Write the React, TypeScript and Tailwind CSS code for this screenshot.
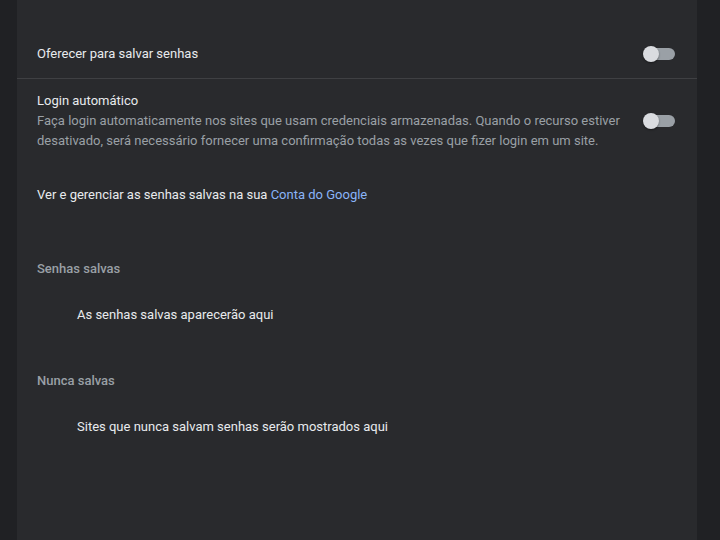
import React from "react";

const Toggle = () => (
  <div className="relative w-[32px] h-4 shrink-0">
    <div className="absolute left-[3px] right-0 top-[2px] h-3 rounded-full bg-[#9aa0a6]" />
    <div className="absolute left-0 top-0 w-4 h-4 rounded-full bg-[#dadce0] shadow-[0_1px_2px_rgba(0,0,0,0.4)]" />
  </div>
);

export default function App() {
  return (
    <div
      className="h-[540px] w-[720px] overflow-hidden bg-[#202124] pl-[17px] text-[13px] leading-5 text-[#e8eaed]"
      style={{ fontFamily: "Roboto, 'Liberation Sans', sans-serif" }}
    >
      <div className="h-full w-[680px] bg-[#292a2d]">
        <div className="h-[30px]" />

        <div className="flex h-12 items-center justify-between pl-5 pr-[22px]">
          <span>Oferecer para salvar senhas</span>
          <Toggle />
        </div>

        <div className="flex items-center justify-between border-t border-[#3f4043] pl-5 pr-[22px] pt-[12px]">
          <div>
            <div>Login automático</div>
            <div className="text-[#9aa0a6]">
              Faça login automaticamente nos sites que usam credenciais armazenadas. Quando o recurso estiver
              <br />
              desativado, será necessário fornecer uma confirmação todas as vezes que fizer login em um site.
            </div>
          </div>
          <Toggle />
        </div>

        <div className="mt-[34px] pl-5">
          Ver e gerenciar as senhas salvas na sua{" "}
          <span className="text-[#8ab4f8]">Conta do Google</span>
        </div>

        <div className="mt-[54px] pl-5 font-medium text-[#9aa0a6]">Senhas salvas</div>
        <div className="mt-[26px] pl-[60px]">As senhas salvas aparecerão aqui</div>

        <div className="mt-[46px] pl-5 font-medium text-[#9aa0a6]">Nunca salvas</div>
        <div className="mt-[26px] pl-[60px]">Sites que nunca salvam senhas serão mostrados aqui</div>
      </div>
    </div>
  );
}
